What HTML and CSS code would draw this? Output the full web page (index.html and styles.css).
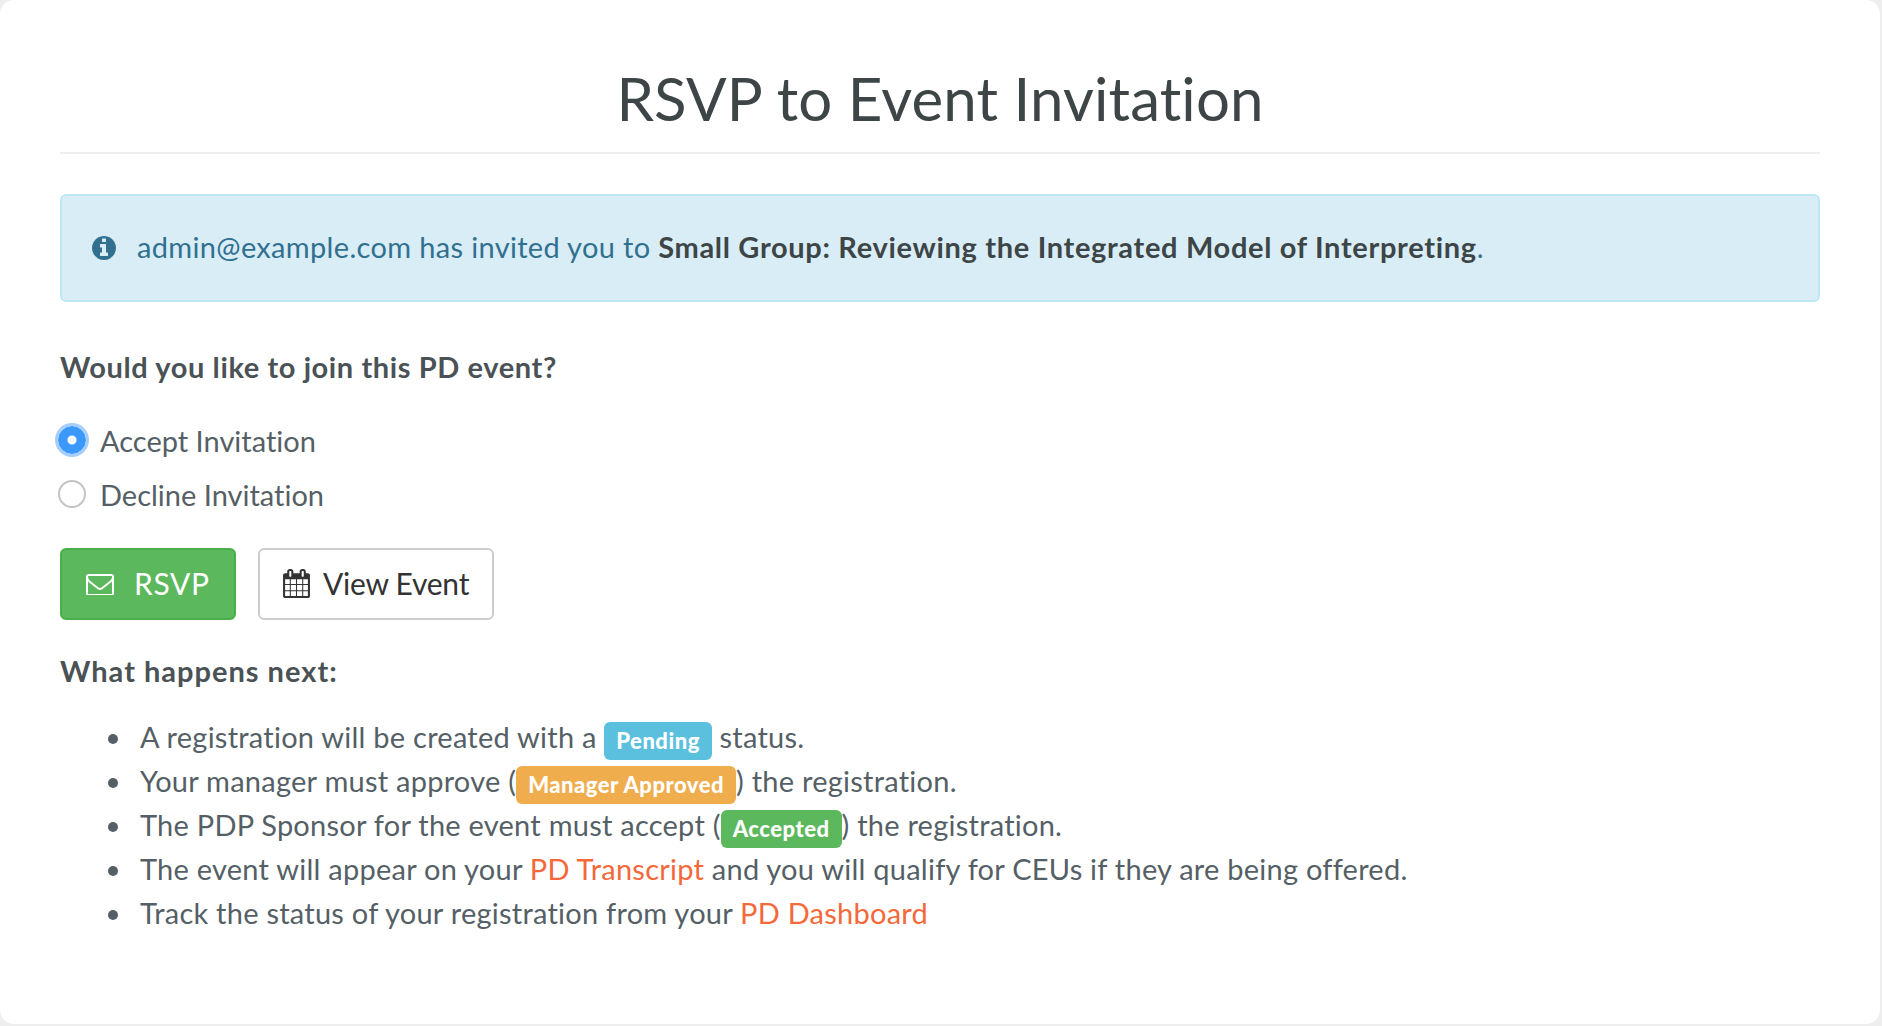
FILE: index.html
```html
<!DOCTYPE html>
<html lang="en">
<head>
<meta charset="utf-8">
<title>RSVP to Event Invitation</title>
<link rel="stylesheet" href="styles.css">
</head>
<body>
<main class="card">
  <h1 class="title">RSVP to Event Invitation</h1>
  <div class="alert">
    <svg class="alert-icon" viewBox="128 128 1536 1536"><path fill="currentColor" d="M1152 1376v-160q0-14-9-23t-23-9h-96v-512q0-14-9-23t-23-9H672q-14 0-23 9t-9 23v160q0 14 9 23t23 9h96v320h-96q-14 0-23 9t-9 23v160q0 14 9 23t23 9h448q14 0 23-9t9-23zm-128-896V320q0-14-9-23t-23-9H800q-14 0-23 9t-9 23v160q0 14 9 23t23 9h192q14 0 23-9t9-23zm640 416q0 209-103 385.5T1281.5 1561 896 1664t-385.5-103T231 1281.5 128 896t103-385.5T510.5 231 896 128t385.5 103T1561 510.5 1664 896z"/></svg>
    <span class="alert-text">admin@example.com has invited you to <strong class="alert-strong">Small Group: Reviewing the Integrated Model of Interpreting</strong>.</span>
  </div>
  <form class="form">
    <p class="question">Would you like to join this PD event?</p>
    <div class="radios">
      <label class="radio-row"><input class="radio" type="radio" name="rsvp" checked><span class="radio-label">Accept Invitation</span></label>
      <label class="radio-row"><input class="radio" type="radio" name="rsvp"><span class="radio-label">Decline Invitation</span></label>
    </div>
    <div class="actions">
      <button class="btn btn-success" type="button">
        <svg class="btn-icon" viewBox="0 256 1792 1280"><path fill="currentColor" d="M1664 1504V736q-32 36-69 66-268 206-426 338-51 43-83 67t-86.500 48.500T897 1280h-2q-48 0-102.500-24.500T706 1207t-83-67q-158-132-426-338-37-30-69-66v768q0 13 9.500 22.500T160 1536h1472q13 0 22.500-9.500t9.500-22.500zm0-1051v-24.500l-.5-13-3-12.500-5.500-9-9-7.500-14-2.500H160q-13 0-22.500 9.500T128 416q0 168 147 284 193 152 401 317 6 5 35 29.500t46 37.500 44.500 31.500T852 1143t43 9h2q20 0 43-9t50.500-27.500 44.500-31.500 46-37.500 35-29.500q208-165 401-317 54-43 100.500-115.500T1664 453zm128-37v1088q0 66-47 113t-113 47H160q-66 0-113-47T0 1504V416q0-66 47-113t113-47h1472q66 0 113 47t47 113z"/></svg>
        <span class="btn-label">RSVP</span>
      </button>
      <button class="btn btn-default" type="button">
        <svg class="cal-icon" viewBox="0 0 1664 1792"><path fill="currentColor" d="M128 1664h288v-288H128v288zm352 0h320v-288H480v288zm-352-352h288V992H128v320zm352 0h320V992H480v320zM128 928h288V640H128v288zm736 736h320v-288H864v288zM480 928h320V640H480v288zm768 736h288v-288h-288v288zm-384-352h320V992H864v320zM512 448V160q0-13-9.500-22.500T480 128h-64q-13 0-22.500 9.500T384 160v288q0 13 9.500 22.500T416 480h64q13 0 22.500-9.500T512 448zm736 864h288V992h-288v320zM864 928h320V640H864v288zm384 0h288V640h-288v288zm32-480V160q0-13-9.500-22.500T1248 128h-64q-13 0-22.500 9.500T1152 160v288q0 13 9.500 22.500t22.500 9.500h64q13 0 22.500-9.500T1280 448zm384-64v1280q0 52-38 90t-90 38H128q-52 0-90-38t-38-90V384q0-52 38-90t90-38h128v-96q0-66 47-113T416 0h64q66 0 113 47t47 113v96h384v-96q0-66 47-113t113-47h64q66 0 113 47t47 113v96h128q52 0 90 38t38 90z"/></svg>
        <span class="btn-label-plain">View Event</span>
      </button>
    </div>
  </form>
  <p class="next-title">What happens next:</p>
  <ul class="steps">
    <li>A registration will be created with a <span class="badge badge-info">Pending</span> status.</li>
    <li>Your manager must approve (<span class="badge badge-warning">Manager Approved</span>) the registration.</li>
    <li>The PDP Sponsor for the event must accept (<span class="badge badge-success">Accepted</span>) the registration.</li>
    <li>The event will appear on your <a class="link" href="#">PD Transcript</a> and you will qualify for CEUs if they are being offered.</li>
    <li>Track the status of your registration from your <a class="link" href="#">PD Dashboard</a></li>
  </ul>
</main>
</body>
</html>
```

FILE: styles.css
```css
* { box-sizing: border-box; }
html, body { margin: 0; height: 100%; }
body {
  background: #eeeeee;
  font-family: "Lato", "Noto Sans", sans-serif;
  font-size: 29px;
  letter-spacing: 0.24px;
  font-variant-ligatures: none;
  color: #555f66;
  overflow: hidden;
}
.card {
  width: 1880px;
  height: 1024px;
  background: #fff;
  border-radius: 14px;
  padding: 60px 60px 0;
}
.title {
  margin: 0;
  height: 94px;
  padding-bottom: 6px;
  border-bottom: 2px solid #eeeeee;
  text-align: center;
  font-weight: 400;
  font-size: 60px;
  letter-spacing: 0.12px;
  line-height: 76px;
  color: #3d4547;
}
.alert {
  margin-top: 40px;
  height: 108px;
  display: flex;
  align-items: center;
  gap: 21px;
  padding: 0 30px;
  background: #d9edf7;
  border: 2px solid #bce8f1;
  border-radius: 6px;
  color: #31708f;
}
.alert-text { margin-top: -4px; letter-spacing: 0.33px; }
.alert-icon { width: 24px; height: 24px; flex: none; }
.alert-strong { color: #3d4547; font-weight: 700; letter-spacing: 0.68px; }
.form { margin: 0; }
.question {
  margin: 45px 0 0;
  font-weight: 700;
  letter-spacing: 0.6px;
  line-height: 40px;
  color: #4a5256;
}
.radios {
  margin-top: 35px;
  display: flex;
  flex-direction: column;
  gap: 14px;
}
.radio-row {
  display: flex;
  align-items: center;
  height: 40px;
  gap: 14px;
  margin-left: -2px;
}
.radio-label { margin-top: -4px; letter-spacing: 0; }
.radio {
  appearance: none;
  margin: -4px 0 0;
  width: 28px;
  height: 28px;
  flex: none;
  background: #fff;
  border: 2px solid #c4c4c4;
  border-radius: 50%;
}
.radio:checked {
  background: radial-gradient(circle, #fff 0 4px, #3b99fc 5px);
  border: 1px solid #3b99fc;
  box-shadow: 0 0 0 3px #a4cdfc;
}
.actions {
  margin-top: 32px;
  display: flex;
  gap: 22px;
}
.btn {
  height: 72px;
  display: flex;
  align-items: center;
  padding: 0;
  border-radius: 6px;
  font-family: inherit;
  font-size: 30px;
  font-variant-ligatures: none;
}
.btn-success {
  width: 176px;
  gap: 20px;
  padding-left: 24px;
  background: #5cb85c;
  border: 2px solid #4cae4c;
  color: #fff;
}
.btn-label { letter-spacing: 0.7px; margin-top: -2px; }
.btn-label-plain { letter-spacing: -0.25px; margin-top: -2px; }
.btn-default {
  width: 236px;
  gap: 13px;
  padding-left: 23px;
  background: #fff;
  border: 2px solid #cccccc;
  color: #333;
}
.btn-icon { width: 28px; height: 22px; flex: none; }
.cal-icon { width: 27px; height: 29px; flex: none; margin-bottom: 2px; }
.next-title {
  margin: 31px 0 0;
  font-weight: 700;
  letter-spacing: 1px;
  line-height: 40px;
  color: #4a5256;
}
.steps {
  margin: 24px 0 0;
  padding: 0 0 0 80px;
  list-style: none;
}
.steps li { height: 44px; line-height: 44px; }
.steps li::before {
  content: "";
  display: inline-block;
  width: 10px;
  height: 10px;
  margin-left: -32px;
  margin-right: 22px;
  border-radius: 50%;
  background: #555f66;
  vertical-align: 4px;
}
.badge {
  display: inline-block;
  height: 38px;
  padding: 0 12px;
  border-radius: 6px;
  color: #fff;
  font-weight: 900;
  font-size: 22px;
  letter-spacing: 0.5px;
  line-height: 38px;
  vertical-align: -1px;
}
.badge-info { background: #5bc0de; }
.badge-warning { background: #f0ad4e; }
.badge-success { background: #5cb85c; }
.link { color: #f4683a; text-decoration: none; }
```
